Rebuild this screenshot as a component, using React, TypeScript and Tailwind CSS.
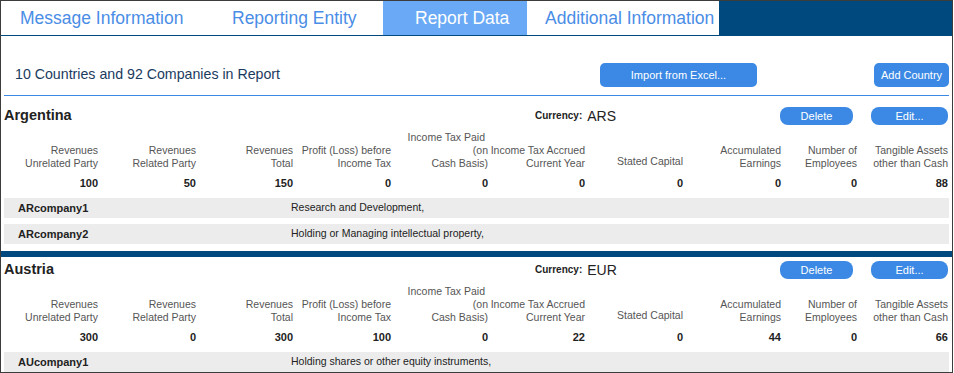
const tabs = [
  { label: "Message Information", cls: "w-[212px] pl-[19px] bg-white text-[#4a8de6]" },
  { label: "Reporting Entity", cls: "w-[170px] pl-[19px] bg-white text-[#4a8de6]" },
  { label: "Report Data", cls: "w-[144px] pl-[32px] bg-[#69a9f5] text-white" },
  { label: "Additional Information", cls: "w-[192px] pl-[18px] bg-white text-[#4a8de6]" },
]

const headers: { lines: string[]; cls?: string }[] = [
  { lines: ["Revenues", "Unrelated Party"] },
  { lines: ["Revenues", "Related Party"] },
  { lines: ["Revenues", "Total"] },
  { lines: ["Profit (Loss) before", "Income Tax"] },
  { lines: ["Income Tax Paid", "(on", "Cash Basis)"] },
  { lines: ["Income Tax Accrued", "Current Year"] },
  { lines: ["Stated Capital"], cls: "mb-[2px]" },
  { lines: ["Accumulated", "Earnings"] },
  { lines: ["Number of", "Employees"] },
  { lines: ["Tangible Assets", "other than Cash"] },
]

const countries = [
  {
    name: "Argentina",
    currency: "ARS",
    values: [100, 50, 150, 0, 0, 0, 0, 0, 0, 88],
    companies: [
      { name: "ARcompany1", activity: "Research and Development," },
      { name: "ARcompany2", activity: "Holding or Managing intellectual property," },
    ],
  },
  {
    name: "Austria",
    currency: "EUR",
    values: [300, 0, 300, 100, 0, 22, 0, 44, 0, 66],
    companies: [{ name: "AUcompany1", activity: "Holding shares or other equity instruments," }],
  },
]

const grid = "grid grid-cols-[94px_98px_97px_98px_97px_97px_98px_98px_76px_91px]"

function Country({ c, first }: { c: (typeof countries)[number]; first: boolean }) {
  return (
    <section className={first ? "px-[3px] pt-[11px]" : "px-[3px] pt-[4px]"}>
      <div className="flex h-[18px] items-center">
        <div className="w-[531px] text-[14.5px] font-bold text-[#222]">{c.name}</div>
        <span className="text-[10px] font-bold text-[#222] -mt-[2px]">Currency:</span>
        <span className="ml-[5px] text-[14px] text-[#222]">{c.currency}</span>
        <button className="ml-auto h-[18px] w-[73px] rounded-[8px] bg-[#3b89e4] text-[11px] text-white">Delete</button>
        <button className="ml-[18px] mr-[1px] h-[18px] w-[77px] rounded-[8px] bg-[#3b89e4] text-[11px] text-white">Edit...</button>
      </div>

      <div className={`${grid} mt-[6px] text-[10.5px] leading-[13px] text-[#555]`}>
        {headers.map((h, i) => (
          <div key={i} className="flex h-[39px] flex-col justify-end text-right">
            <div className={h.cls}>
              {h.lines.map((l, j) => (
                <div key={j} className={i === 4 && j === 0 ? "pr-[3px] whitespace-nowrap" : "whitespace-nowrap"}>{l}</div>
              ))}
            </div>
          </div>
        ))}
      </div>

      <div className={`${grid} mt-[7px] text-[11px] leading-[13px] font-bold text-[#222]`}>
        {c.values.map((v, i) => (
          <div key={i} className="text-right">{v}</div>
        ))}
      </div>

      <div className="mt-[8px] flex flex-col gap-[6px]">
        {c.companies.map((co) => (
          <div key={co.name} className="flex h-[20px] items-center bg-[#ececec]">
            <div className="w-[287px] pl-[14px] text-[11px] font-bold text-[#222]">{co.name}</div>
            <div className="text-[10.5px] text-[#222]">{co.activity}</div>
          </div>
        ))}
      </div>
    </section>
  )
}

export default function App() {
  return (
    <div className="h-[373px] w-[953px] overflow-hidden border border-[#3c3c3c] bg-white font-['Liberation_Sans',Arial,sans-serif]">
      <nav className="flex h-[35px] border-b border-[#00497e] bg-[#00497e]">
        {tabs.map((t) => (
          <div key={t.label} className={`flex h-[34px] items-center text-[17.5px] ${t.cls}`}>{t.label}</div>
        ))}
      </nav>

      <div className="px-[3px]">
        <div className="flex items-center border-b border-[#3b89e4] pt-[27px] pb-[8px]">
          <div className="flex-1 pl-[11px] text-[14.2px] text-[#1b3b5e]">10 Countries and 92 Companies in Report</div>
          <button className="h-[24px] w-[157px] rounded-[5px] bg-[#3b89e4] text-[11px] text-white">Import from Excel...</button>
          <button className="ml-[117px] h-[24px] w-[75px] rounded-[5px] bg-[#3b89e4] text-[11px] text-white">Add Country</button>
        </div>
      </div>

      {countries.map((c, i) => (
        <div key={c.name}>
          <Country c={c} first={i === 0} />
          {i === 0 && <div className="mt-[7px] h-[6px] bg-[#00497e]" />}
        </div>
      ))}
    </div>
  )
}
